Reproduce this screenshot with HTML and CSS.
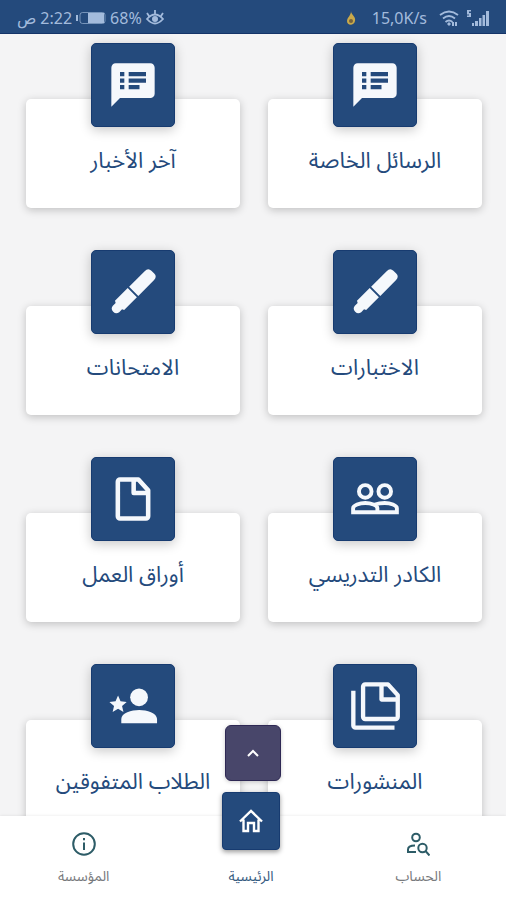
FILE: index.html
```html
<!DOCTYPE html>
<html lang="ar" dir="rtl">
<head>
<meta charset="utf-8">
<meta name="viewport" content="width=device-width, initial-scale=1">
<title>الرئيسية</title>
<link rel="stylesheet" href="styles.css">
</head>
<body>
<svg class="defs" aria-hidden="true">
  <symbol id="notes" viewBox="0 0 24 24"><path fill="currentColor" d="M20 2H4c-1.1 0-1.99.9-1.99 2L2 22l4-4h14c1.1 0 2-.9 2-2V4c0-1.1-.9-2-2-2zM8 14H6v-2h2v2zm0-3H6V9h2v2zm0-3H6V6h2v2zm7 6h-5v-2h5v2zm3-3h-8V9h8v2zm0-3h-8V6h8v2z"/></symbol>
  <symbol id="pen" viewBox="0 0 52 52"><g fill="currentColor" transform="translate(26 26) rotate(-45)"><path d="M1-6.500H23Q28-6.500 28-2V2Q28 6.500 23 6.500H1z"/><path d="M-1-6.500H-19L-20-4.500H-24Q-28-4-28 0T-24 4.500H-20L-19 6.500H-1z"/></g></symbol>
  <symbol id="people" viewBox="0 0 24 24"><g fill="none" stroke="currentColor" stroke-width="1.800"><circle cx="7.500" cy="8.500" r="2.900"/><circle cx="16.500" cy="8.500" r="2.900"/><path d="M1.900 18.100v-1.850c0-1.300 3-2.400 5.600-2.400s5.600 1.100 5.600 2.400v1.850zM12 14.600c1.300-.5 3-.75 4.500-.75 2.600 0 5.600 1.100 5.600 2.400v1.850h-9"/></g></symbol>
  <symbol id="file" viewBox="0 0 24 24"><path fill="none" stroke="currentColor" stroke-width="2.100" stroke-linejoin="round" d="M5 4a1 1 0 0 1 1-1h8.500l4.500 5v12a1 1 0 0 1-1 1H6a1 1 0 0 1-1-1zM12.300 3v6.200H19"/></symbol>
  <symbol id="files" viewBox="0 0 24 24"><path fill="none" stroke="currentColor" stroke-width="2" stroke-linejoin="round" d="M6.500 3a1 1 0 0 1 1-1h10.500l4.500 5v10a1 1 0 0 1-1 1h-14a1 1 0 0 1-1-1zM15 2v7h7.500M2 5v16a1 1 0 0 0 1 1H21"/></symbol>
  <symbol id="star-user" viewBox="0 0 24 24"><g fill="currentColor"><circle cx="14.800" cy="8" r="4.100"/><path d="M6.600 20v-2c0-2.900 4.700-4.200 8.250-4.200s8.250 1.300 8.250 4.200v2zM5.100 7.200l1.150 2.650 2.850.25-2.150 1.900.65 2.800-2.500-1.500-2.500 1.500.65-2.800-2.150-1.900 2.850-.25z"/></g></symbol>
  <symbol id="info" viewBox="0 0 24 24"><g fill="none" stroke="currentColor" stroke-width="2"><circle cx="12" cy="12" r="10.800"/><path d="M12 10.500V18M12 6v2.200"/></g></symbol>
  <symbol id="search-user" viewBox="0 0 24 24"><g fill="none" stroke="currentColor" stroke-width="2"><circle cx="10" cy="5.500" r="3.800"/><path d="M10 20H2v-2.500c0-2.500 3-4 7-4"/><circle cx="16.500" cy="16" r="4.200"/><path d="M19.500 19l4 4.500"/></g></symbol>
  <symbol id="home" viewBox="0 0 24 24"><path fill="none" stroke="currentColor" stroke-width="2.400" d="M1 12.500L12 2l11 10.500M4.500 10.500V22H9v-8h6v8h4.500V10.500"/></symbol>
</svg>

<header class="status" dir="ltr">
  <div class="status-group">
    <span>ص</span><span>2:22</span>
    <svg class="battery" viewBox="0 0 30 14"><path d="M1 4v6" stroke="currentColor" stroke-width="2"/><rect x="4" y="1.500" width="25" height="11" rx="2.500" fill="none" stroke="currentColor" opacity=".65"/><rect x="12" y="2" width="16" height="10" fill="currentColor"/></svg>
    <span>68%</span>
    <svg class="eye" viewBox="0 0 18 16"><g fill="none" stroke="currentColor" stroke-width="1.800"><path d="M1 9q8-9 16 0-8 9-16 0zM3 6L1 3M9 4V0M15 6l2-3"/></g><circle cx="9" cy="9" r="3" fill="currentColor"/></svg>
  </div>
  <div class="status-group">
    <svg class="drop" viewBox="0 0 10 14"><path fill="#c9a94b" d="M5 0c0 4 5 5 4 10-1 5-8 5-8 0 0-4 4-5 4-10z"/><circle cx="5" cy="10" r="2" fill="#76633c"/></svg>
    <span class="speed">15,0K/s</span>
    <svg class="wifi" viewBox="0 0 20 16"><g fill="none" stroke="currentColor" stroke-width="1.800"><path d="M1 5q9-7 18 0M4 8.500q6-5 12 0M6.500 12q3.500-3 7 0"/></g><path fill="currentColor" d="M8 14l2-2 2 2-2 2zM13 12h2v4h-2zM16 12h2v4h-2z"/></svg>
    <svg class="signal" viewBox="0 0 22 16"><path fill="currentColor" d="M0 0h4v1.500H2V3h2v4H0V5.500h2v-1H0zM5 13h2v3H5zM8 11h3v5H8zM12 8h2.500v8H12zM15.500 5H18v11h-2.500zM19 1h3v15h-3z"/></svg>
  </div>
</header>

<main class="content">
  <div class="grid">
    <a class="item" href="#messages"><span class="tile"><svg><use href="#notes"/></svg></span><span class="card">الرسائل الخاصة</span></a>
    <a class="item" href="#news"><span class="tile"><svg><use href="#notes"/></svg></span><span class="card">آخر الأخبار</span></a>
    <a class="item" href="#quizzes"><span class="tile"><svg><use href="#pen"/></svg></span><span class="card">الاختبارات</span></a>
    <a class="item" href="#exams"><span class="tile"><svg><use href="#pen"/></svg></span><span class="card">الامتحانات</span></a>
    <a class="item" href="#staff"><span class="tile"><svg><use href="#people"/></svg></span><span class="card">الكادر التدريسي</span></a>
    <a class="item" href="#worksheets"><span class="tile"><svg><use href="#file"/></svg></span><span class="card">أوراق العمل</span></a>
    <a class="item" href="#posts"><span class="tile"><svg><use href="#files"/></svg></span><span class="card">المنشورات</span></a>
    <a class="item" href="#honors"><span class="tile"><svg><use href="#star-user"/></svg></span><span class="card">الطلاب المتفوقين</span></a>
  </div>
</main>

<nav class="nav">
  <button class="to-top" type="button" aria-label="إلى الأعلى"><svg viewBox="0 0 12 8"><path d="M1 7l5-5 5 5" fill="none" stroke="currentColor" stroke-width="2"/></svg></button>
  <a class="tab" href="#account"><svg><use href="#search-user"/></svg><span>الحساب</span></a>
  <a class="tab active" href="#home"><span class="home-tile"><svg><use href="#home"/></svg></span><span>الرئيسية</span></a>
  <a class="tab" href="#institution"><svg><use href="#info"/></svg><span>المؤسسة</span></a>
</nav>
</body>
</html>
```
FILE: styles.css
```css
* { box-sizing: border-box; }
body {
  margin: 0;
  height: 100vh;
  display: flex;
  flex-direction: column;
  background: #f4f4f5;
  color: #244a7c;
  font-family: "Noto Sans", "Noto Sans Arabic", "DejaVu Sans", sans-serif;
}
a { color: inherit; text-decoration: none; }
svg { display: block; }
.defs { position: absolute; width: 0; height: 0; }

.status {
  flex: none;
  height: 34px;
  padding: 2px 17px 0;
  display: flex;
  align-items: center;
  justify-content: space-between;
  background: #244a7c;
  border-bottom: 1px solid #153468;
  color: #a3bbdc;
  font: 16px/24px "Noto Sans", "DejaVu Sans", sans-serif;
}
.status-group { display: flex; align-items: center; gap: 4px; }
.battery { width: 30px; height: 14px; }
.eye { width: 18px; height: 16px; }
.drop { width: 10px; height: 14px; }
.speed { margin: 0 8px 0 12px; }
.wifi { width: 20px; height: 16px; }
.signal { width: 22px; height: 16px; margin-left: 4px; }

.content { flex: 1; min-height: 0; overflow: hidden; }
.grid {
  display: grid;
  grid-template-columns: 1fr 1fr;
  gap: 42px 28px;
  padding: 9px 24px 42px 26px;
}
.item { display: flex; flex-direction: column; align-items: center; }
.tile {
  position: relative;
  width: 84px;
  height: 84px;
  display: grid;
  place-items: center;
  background: #244a7c;
  border: 1px solid #173b70;
  border-radius: 5px;
  color: #f5f8fc;
  box-shadow: 0 3px 12px rgba(0, 0, 0, .22);
}
.tile svg { width: 52px; height: 52px; }
.card {
  width: 100%;
  min-height: 109px;
  margin-top: -28px;
  padding: 44px 8px 32px;
  background: #fff;
  border-radius: 5px;
  box-shadow: 0 2px 8px rgba(0, 0, 0, .22);
  text-align: center;
  font-size: 22px;
  line-height: 33px;
}

.nav {
  position: relative;
  flex: none;
  height: 84px;
  padding-right: 4px;
  display: grid;
  grid-template-columns: 1fr 1fr 1fr;
  grid-template-rows: 100%;
  background: #fff;
  box-shadow: 0 0 3px rgba(0, 0, 0, .1);
}
.tab {
  display: flex;
  flex-direction: column;
  align-items: center;
  justify-content: flex-end;
  gap: 8px;
  padding-bottom: 12px;
  color: #77797c;
  font-size: 14px;
  line-height: 24px;
}
.tab svg { width: 24px; height: 24px; color: #2d5c67; }
.tab.active { gap: 14px; color: #365b80; }
.home-tile {
  flex: none;
  width: 58px;
  height: 58px;
  display: grid;
  place-items: center;
  background: #244a7c;
  border: 1px solid #173b70;
  border-radius: 4px;
  box-shadow: 0 2px 5px rgba(0, 0, 0, .4);
}
.tab.active svg { color: #fff; }
.to-top {
  position: absolute;
  bottom: 119px;
  left: 50%;
  transform: translateX(-50%);
  width: 56px;
  height: 56px;
  padding: 0;
  display: grid;
  place-items: center;
  background: #48466a;
  border: 1px solid #2e2854;
  border-radius: 6px;
  color: #fff;
  box-shadow: 0 1px 4px rgba(0, 0, 0, .2);
}
.to-top svg { width: 12px; height: 8px; }
```
